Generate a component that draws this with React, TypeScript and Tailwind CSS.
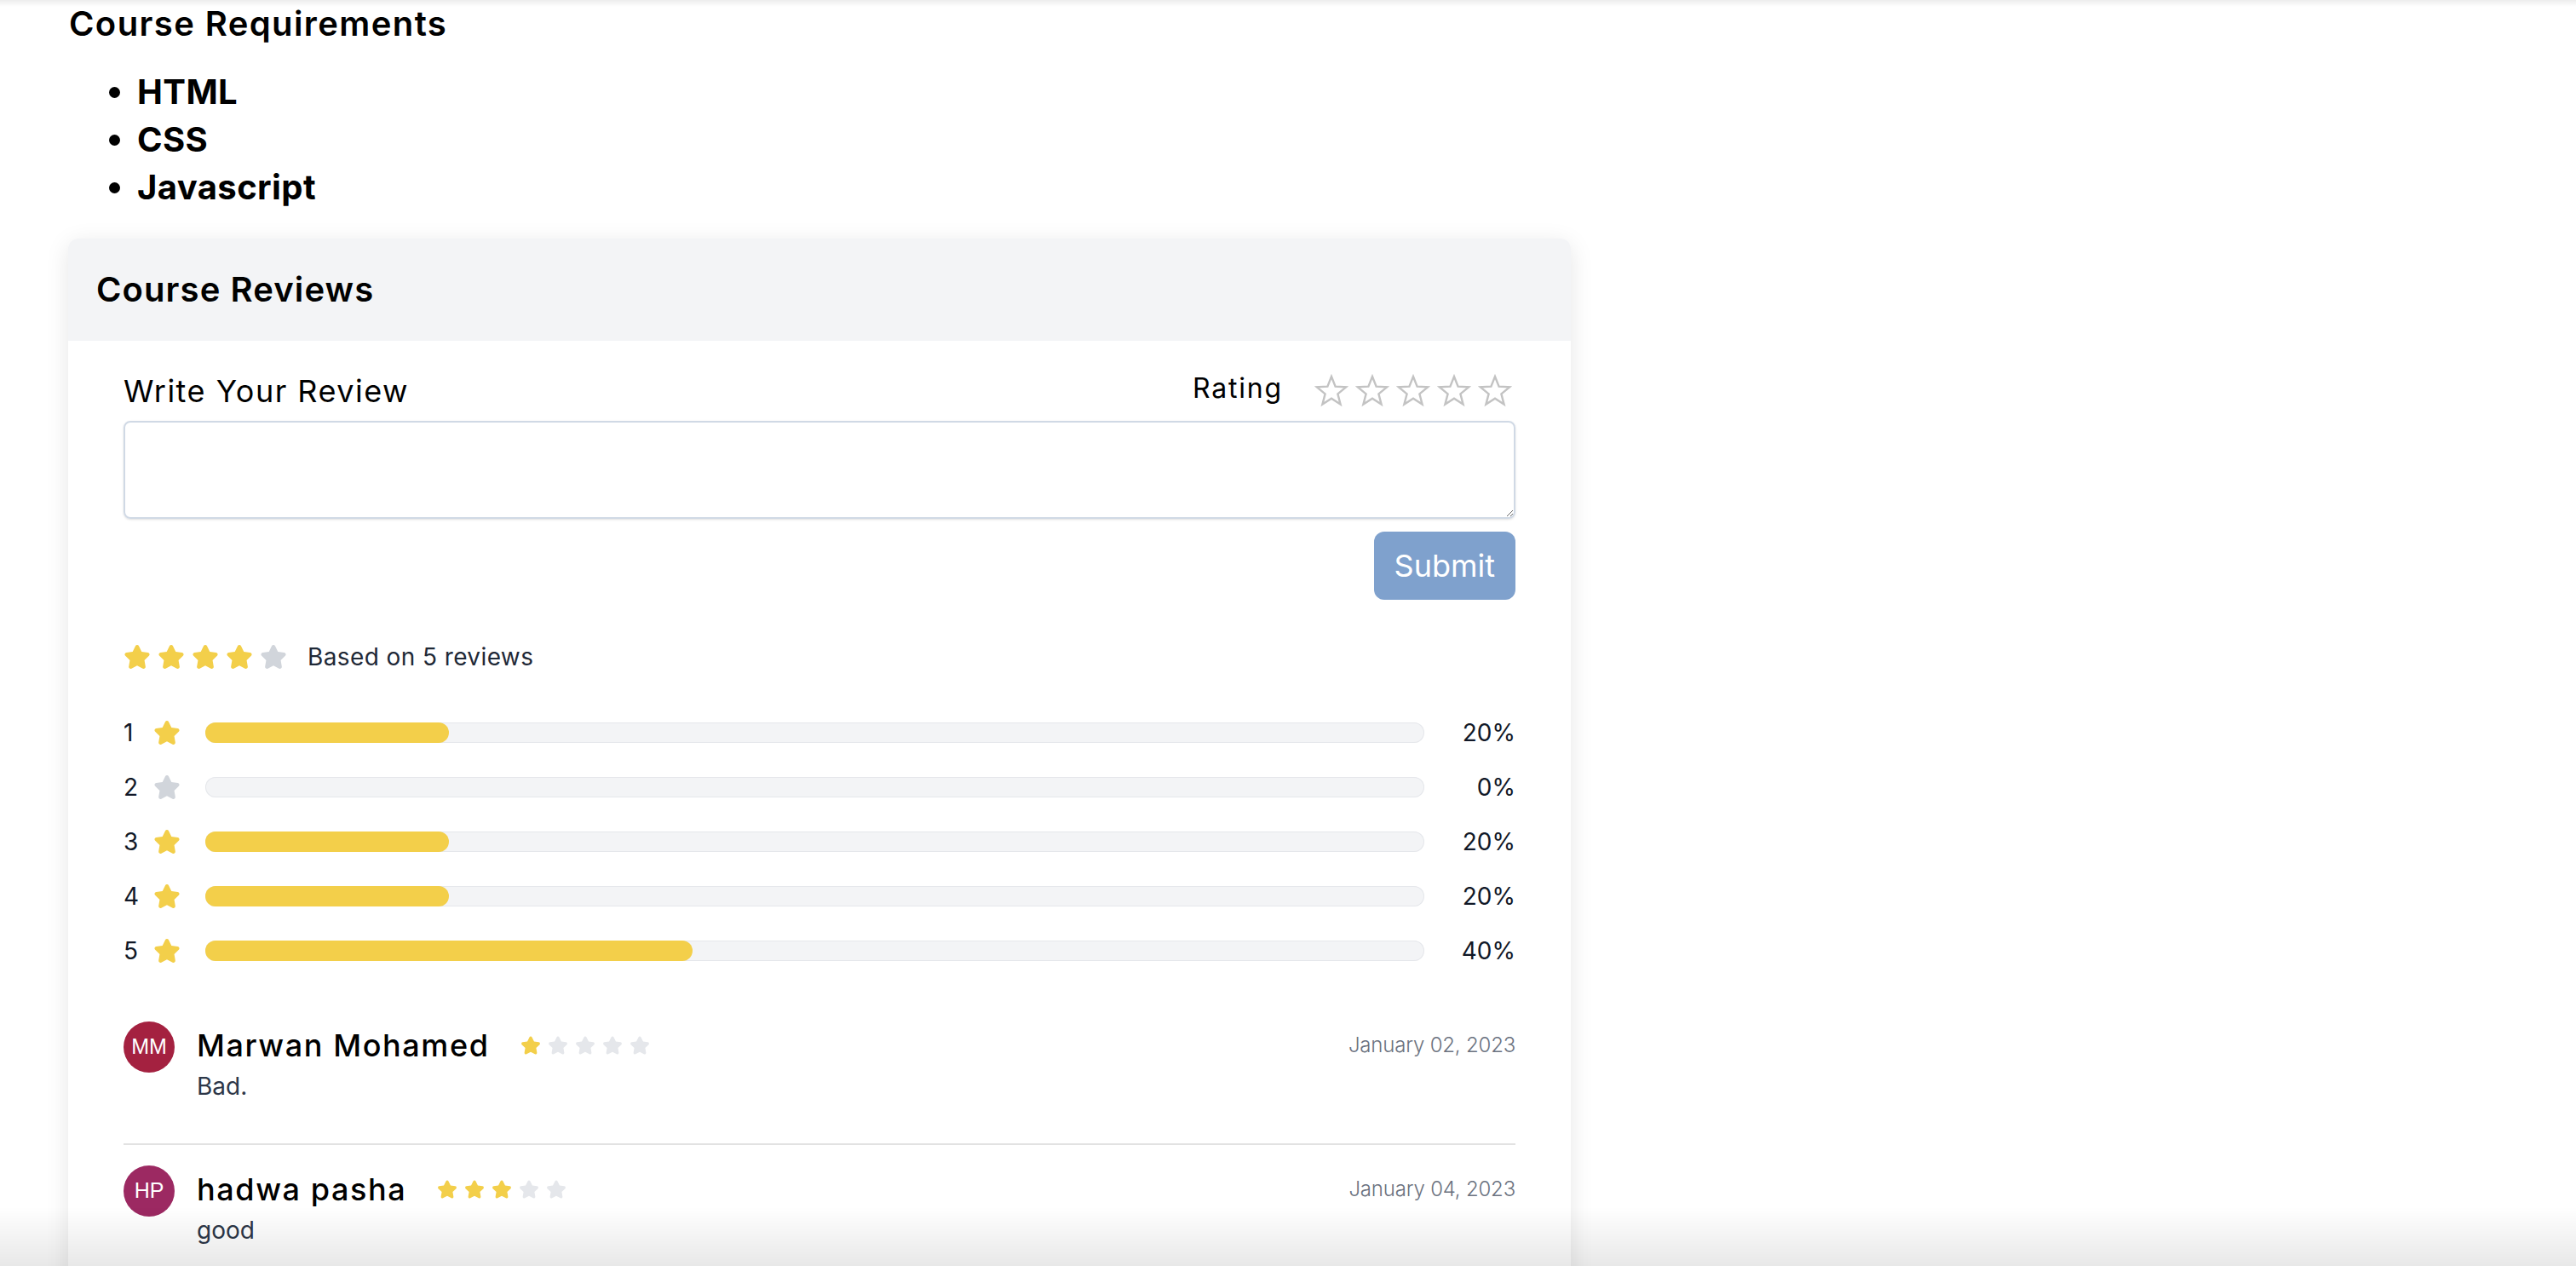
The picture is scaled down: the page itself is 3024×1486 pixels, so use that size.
import React from "react";

const STAR =
  "M20.924 7.625a1.523 1.523 0 0 0-1.238-1.044l-5.051-.734-2.259-4.577a1.534 1.534 0 0 0-2.752 0L7.365 5.847l-5.051.734A1.535 1.535 0 0 0 1.463 9.2l3.656 3.563-.863 5.031a1.532 1.532 0 0 0 2.226 1.616L11 17.033l4.518 2.375a1.534 1.534 0 0 0 2.226-1.617l-.863-5.03L20.537 9.2a1.523 1.523 0 0 0 .387-1.575Z";

function Star({ size, color }: { size: number; color: string }) {
  return (
    <svg width={size} height={size} viewBox="0 0 22 20" fill={color} aria-hidden="true">
      <path d={STAR} />
    </svg>
  );
}

function OutlineStar() {
  return (
    <svg width={40} height={40} viewBox="0 0 40 40" aria-hidden="true">
      <polygon
        points="20,3 24.6,14.7 37.1,15.4 27.4,23.4 30.6,35.6 20,28.8 9.4,35.6 12.6,23.4 2.9,15.4 15.4,14.7"
        fill="none"
        stroke="#c3c3c3"
        strokeWidth={2.4}
        strokeLinejoin="miter"
      />
    </svg>
  );
}

const YELLOW = "#f3cf4a";

const bars = [
  { n: 1, pct: 20 },
  { n: 2, pct: 0 },
  { n: 3, pct: 20 },
  { n: 4, pct: 20 },
  { n: 5, pct: 40 },
];

const reviews = [
  { initials: "MM", color: "bg-[#a42140]", name: "Marwan Mohamed", rating: 1, date: "January 02, 2023", text: "Bad." },
  { initials: "HP", color: "bg-[#9c2962]", name: "hadwa pasha", rating: 3, date: "January 04, 2023", text: "good" },
];

export default function App() {
  return (
    <div className="min-h-screen bg-white font-['Inter',sans-serif] text-black pl-[81px] pb-[40px]">
      <h2 className="text-[40px] leading-[56px] font-semibold tracking-[1.4px]">Course Requirements</h2>
      <ul className="mt-[24px] list-disc pl-[80px] text-[40px] leading-[56px] font-bold tracking-[0.4px]">
        <li>HTML</li>
        <li>CSS</li>
        <li>Javascript</li>
      </ul>

      <div className="mt-[32px] w-[1764px] -ml-[1px] rounded-[12px] bg-white shadow-[0_6px_28px_rgba(0,0,0,0.10)] overflow-hidden">
        <div className="bg-[#f3f4f6] px-[33px] py-[32px]">
          <h3 className="text-[40px] leading-[56px] font-semibold tracking-[1.1px]">Course Reviews</h3>
        </div>

        <div className="px-[65px] pt-[31px] pb-[120px]">
          <div className="flex h-[56px] items-center justify-between">
            <span className="text-[36px] leading-[56px] tracking-[1.5px]">Write Your Review</span>
            <div className="flex items-center mr-[4px]">
              <span className="text-[32px] leading-[48px] mb-[6px] tracking-[1.8px]">Rating</span>
              <div className="ml-[37px] flex gap-[8px]">
                {[0, 1, 2, 3, 4].map((i) => (
                  <OutlineStar key={i} />
                ))}
              </div>
            </div>
          </div>

          <textarea className="mt-[7px] block h-[115px] w-full rounded-[8px] border-2 border-[#d0d9e5] shadow-sm outline-none" />

          <div className="mt-[15px] flex justify-end">
            <button className="h-[80px] rounded-[12px] bg-[#7fa1cd] px-[24px] text-[36px] text-white">Submit</button>
          </div>

          <div className="mt-[47px] flex h-[40px] items-center">
            <div className="flex gap-[8px]">
              {[0, 1, 2, 3, 4].map((i) => (
                <Star key={i} size={32} color={i < 4 ? YELLOW : "#d1d5db"} />
              ))}
            </div>
            <span className="ml-[24px] text-[28px] text-[#1f2937] tracking-[0.4px]">Based on 5 reviews</span>
          </div>

          <div className="mt-[49px] flex flex-col gap-[24px]">
            {bars.map((b) => (
              <div key={b.n} className="flex h-[40px] items-center">
                <span className="w-[35px] text-[28px] text-[#111827]">{b.n}</span>
                <Star size={32} color={b.pct > 0 ? YELLOW : "#d1d5db"} />
                <div className="ml-[29px] h-[24px] flex-1 rounded-full bg-[#f3f4f6] shadow-[inset_0_0_0_1px_#e5e7eb]">
                  <div className="h-full rounded-full" style={{ width: `${b.pct}%`, backgroundColor: YELLOW }} />
                </div>
                <span className="w-[107px] text-right text-[28px] text-[#111827]">{b.pct}%</span>
              </div>
            ))}
          </div>

          <div className="mt-[63px]">
            {reviews.map((r, idx) => (
              <div
                key={r.name}
                className={
                  idx === 0
                    ? "flex items-start border-b-2 border-[#e2e2e2] pb-[47px]"
                    : "flex items-start pt-[24px] pb-[47px]"
                }
              >
                <div
                  className={`flex h-[60px] w-[60px] shrink-0 items-center justify-center rounded-full ${r.color} font-['Liberation_Sans',Arial,sans-serif] text-[25px] text-white`}
                >
                  {r.initials}
                </div>
                <div className="ml-[26px] flex-1">
                  <div className="flex h-[56px] items-center justify-between">
                    <div className="flex items-center">
                      <span className="text-[36px] leading-[56px] font-medium tracking-[1.6px]">{r.name}</span>
                      <div className="ml-[36px] flex gap-[8px]">
                        {[0, 1, 2, 3, 4].map((i) => (
                          <Star key={i} size={24} color={i < r.rating ? YELLOW : "#e5e7eb"} />
                        ))}
                      </div>
                    </div>
                    <span className="text-[24px] font-light text-[#6b7280] tracking-[-0.2px]">{r.date}</span>
                  </div>
                  <p className="text-[28px] leading-[40px] text-[#2d3748]">{r.text}</p>
                </div>
              </div>
            ))}
          </div>
        </div>
      </div>

      <div className="pointer-events-none fixed inset-x-0 top-0 h-[8px] bg-linear-to-b from-[rgba(0,0,0,0.07)] to-transparent" />
      <div className="pointer-events-none fixed inset-x-0 bottom-0 h-[70px] bg-linear-to-b from-transparent to-[rgba(0,0,0,0.09)]" />
    </div>
  );
}
